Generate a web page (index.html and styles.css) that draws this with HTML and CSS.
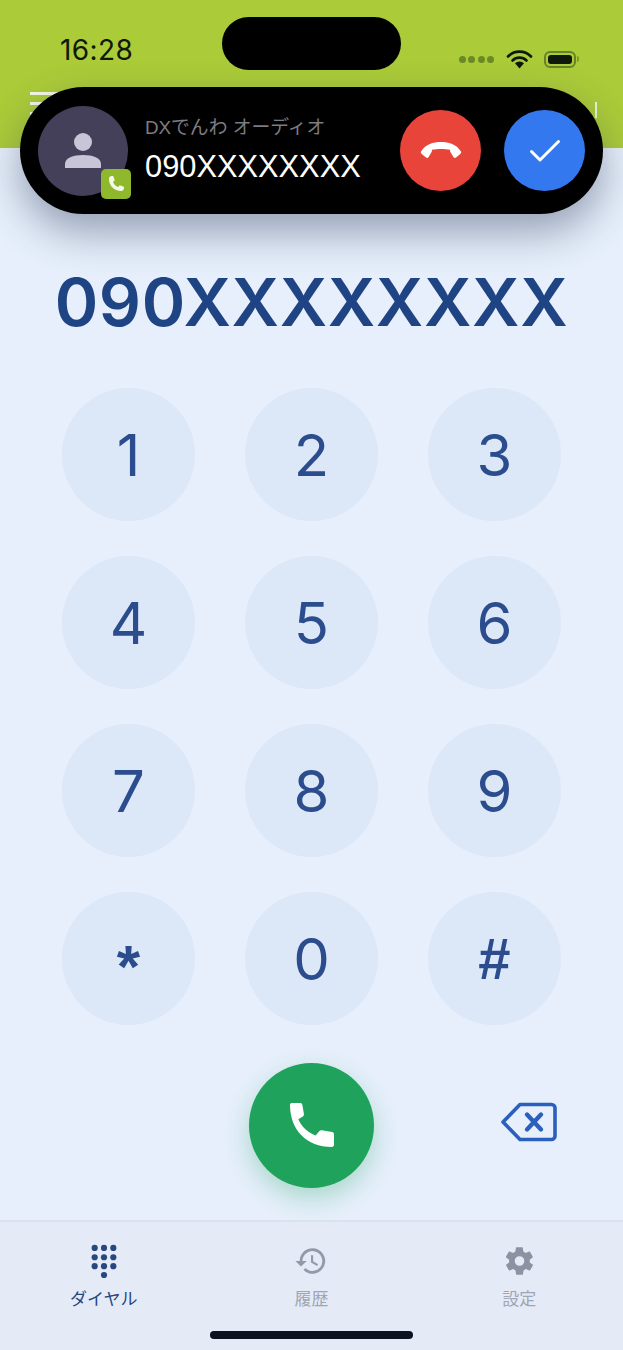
FILE: index.html
```html
<!DOCTYPE html>
<html lang="ja">
<head>
  <meta charset="UTF-8">
  <title>DXでんわ</title>
  <meta name="viewport" content="width=device-width, initial-scale=1">
  <link rel="stylesheet" href="styles.css">
</head>
<body>
  <div class="phone">
    <header class="top-bar">
      <div class="status-row">
        <span class="clock">16:28</span>
        <div class="status-icons">
          <div class="signal"><i></i><i></i><i></i><i></i></div>
          <svg class="wifi" width="27" height="20" viewBox="0 0 27 20">
            <path d="M2 7.500a16 16 0 0 1 23 0" fill="none" stroke="#10180a" stroke-width="2.600" stroke-linecap="round"/>
            <path d="M6.500 11.500a10 10 0 0 1 14 0" fill="none" stroke="#10180a" stroke-width="2.600" stroke-linecap="round"/>
            <path d="M9 14.200a6.500 6.500 0 0 1 9 0L13.500 19.500z" fill="#10180a"/>
          </svg>
          <div class="battery"><div class="battery-fill"></div></div>
          <div class="battery-cap"></div>
        </div>
      </div>
      <div class="nav-row">
        <div class="menu-icon"><i></i><i></i><i></i></div>
        <div class="nav-end"></div>
      </div>
    </header>

    <div class="island"></div>

    <div class="call-pill">
      <div class="avatar">
        <svg width="36" height="35" viewBox="0 0 36 35">
          <circle cx="18" cy="9" r="9" fill="#c9c5d8"/>
          <path d="M0 35v-4c0-6 8-9 18-9s18 3 18 9v4z" fill="#c9c5d8"/>
        </svg>
        <div class="avatar-badge">
          <svg width="20" height="20" viewBox="0 0 24 24">
            <path d="M6.600 2.500c-1 0-3.100 1-3.100 3.300C3.500 14 10 20.500 18.200 20.500c2.300 0 3.300-2.100 3.300-3.100v-2l-5-2-2 2.200c-2.700-1-5.100-3.400-6.100-6.100l2.200-2-2-5z" fill="#f4f8e6"/>
          </svg>
        </div>
      </div>
      <div class="call-info">
        <div class="call-app">DXでんわ オーディオ</div>
        <div class="call-number">090XXXXXXXX</div>
      </div>
      <div class="call-actions">
        <button class="round-btn decline">
          <svg width="44" height="24" viewBox="0 0 44 24">
            <path d="M2 12.500C7 5 14 3 22 3s15 2 20 9.500c.6 1-.2 2-1 2.700l-4 3.300c-1 .8-2 .5-2.600-.4l-3-5.100c-.5-.8-.4-1.800-.2-2.200-5.500-1.200-12.900-1.200-18.400 0 .2.400.3 1.400-.2 2.200l-3 5.100c-.6.900-1.600 1.200-2.600.4l-4-3.300c-.8-.7-1.600-1.700-1-2.700z" fill="#fff"/>
          </svg>
        </button>
        <button class="round-btn accept">
          <svg width="32" height="24" viewBox="0 0 32 24">
            <path d="M2.500 12.500l8.500 8.500L29.500 2.500" fill="none" stroke="#fff" stroke-width="3" stroke-linecap="round" stroke-linejoin="round"/>
          </svg>
        </button>
      </div>
    </div>

    <main class="dialer">
      <div class="dialed-number">090XXXXXXXX</div>
      <div class="keypad">
        <button class="key">1</button>
        <button class="key">2</button>
        <button class="key">3</button>
        <button class="key">4</button>
        <button class="key">5</button>
        <button class="key">6</button>
        <button class="key">7</button>
        <button class="key">8</button>
        <button class="key">9</button>
        <button class="key key-star">*</button>
        <button class="key">0</button>
        <button class="key key-hash">#</button>
      </div>
      <div class="dial-actions">
        <div></div>
        <button class="call-btn">
          <svg width="44" height="45" viewBox="8 3 36 40" preserveAspectRatio="none">
            <path d="M8 4.500c0-1 .8-1.500 1.700-1.500h6.500c1 0 1.700.6 1.900 1.500l1.300 8.300c.1.900-.2 1.600-.9 2.100l-3.700 2.600c2.200 6.200 8 12 14.200 14.400l2.900-3.800c.6-.7 1.300-.9 2.100-.8l8.500 1.500c.9.200 1.500.9 1.500 1.900v9.700c0 1-.7 1.600-1.700 1.600C21.500 42 8 27 8 4.500z" fill="#fff"/>
          </svg>
        </button>
        <button class="backspace">
          <svg width="60" height="40" viewBox="0 0 60 40">
            <path d="M20 2.500h31.500a3.500 3.500 0 0 1 3.500 3.500v28a3.500 3.500 0 0 1-3.500 3.500H20L3 20z" fill="none" stroke="#2b5fbd" stroke-width="3.600" stroke-linejoin="round"/>
            <path d="M27 12.500l14 15M41 12.500l-14 15" fill="none" stroke="#2b5fbd" stroke-width="4.400" stroke-linecap="round"/>
          </svg>
        </button>
      </div>
    </main>

    <nav class="tab-bar">
      <div class="tab active">
        <svg width="28" height="36" viewBox="0 0 30 36">
          <g fill="#27477f">
            <circle cx="5" cy="4" r="3.300"/><circle cx="15" cy="4" r="3.300"/><circle cx="25" cy="4" r="3.300"/>
            <circle cx="5" cy="14" r="3.300"/><circle cx="15" cy="14" r="3.300"/><circle cx="25" cy="14" r="3.300"/>
            <circle cx="5" cy="23.500" r="3.300"/><circle cx="15" cy="23.500" r="3.300"/><circle cx="25" cy="23.500" r="3.300"/>
            <circle cx="15" cy="33" r="3.300"/>
          </g>
        </svg>
        <span>ダイヤル</span>
      </div>
      <div class="tab">
        <svg width="34" height="36" viewBox="0 0 24 24">
          <path d="M13 3a9 9 0 0 0-9 9H1l3.900 3.900L9 12H6a7 7 0 1 1 2.100 5l-1.400 1.400A9 9 0 1 0 13 3zm-1 5v5l4.300 2.500.7-1.200-3.500-2.100V8z" fill="#9299a8"/>
        </svg>
        <span>履歴</span>
      </div>
      <div class="tab">
        <svg width="33" height="36" viewBox="0 0 24 24">
          <path d="M19.400 13c.1-.3.100-.7.100-1s0-.7-.1-1l2.100-1.600c.2-.2.200-.4.100-.6l-2-3.500c-.1-.2-.4-.3-.6-.2l-2.500 1c-.5-.4-1.100-.7-1.700-1l-.4-2.700c0-.2-.2-.4-.5-.4h-4c-.2 0-.4.200-.5.400l-.4 2.700c-.6.300-1.200.6-1.700 1l-2.500-1c-.2-.1-.5 0-.6.200l-2 3.500c-.1.200-.1.500.1.600L4.500 11c0 .3-.1.700-.1 1s0 .7.1 1l-2.100 1.600c-.2.200-.2.400-.1.600l2 3.500c.1.200.4.300.6.200l2.500-1c.5.400 1.100.7 1.700 1l.4 2.700c.1.200.3.400.5.400h4c.3 0 .5-.2.500-.4l.4-2.700c.6-.3 1.200-.6 1.700-1l2.500 1c.2.100.5 0 .6-.2l2-3.500c.1-.2.100-.4-.1-.6zM12 15.500a3.500 3.500 0 1 1 0-7 3.500 3.500 0 0 1 0 7z" fill="#8b92a1"/>
        </svg>
        <span>設定</span>
      </div>
      <div class="home-bar"></div>
    </nav>
  </div>
</body>
</html>
```

FILE: styles.css
```css
* {
  box-sizing: border-box;
  font-family: "Liberation Sans", "Noto Sans CJK JP", sans-serif;
}
body {
  margin: 0;
  background: #e6eefa;
}
button {
  border: none;
  padding: 0;
  cursor: pointer;
}
.phone {
  position: relative;
  width: 623px;
  height: 1350px;
  overflow: hidden;
  display: flex;
  flex-direction: column;
  background: #e6effb;
}

/* top green area */
.top-bar {
  height: 148px;
  background: #abcb38;
  padding: 0 26px 0 30px;
  display: flex;
  flex-direction: column;
}
.status-row {
  display: flex;
  justify-content: space-between;
  padding: 33px 0 0 30px;
  height: 92px;
}
.clock {
  font-size: 28px;
  line-height: 34px;
  letter-spacing: 0.4px;
  color: #10180a;
  font-family: "Inter", sans-serif;
}
.status-icons {
  display: flex;
  align-items: center;
  height: 34px;
  margin-top: 9px;
  margin-right: 18px;
}
.signal {
  display: flex;
  gap: 2.500px;
  margin-right: 12px;
}
.signal i {
  width: 7px;
  height: 7px;
  border-radius: 50%;
  background: #6b8a26;
}
.wifi {
  margin-right: 11px;
}
.battery {
  width: 32px;
  height: 17px;
  border: 2px solid #66832a;
  border-radius: 6px;
  padding: 2px;
}
.battery-fill {
  height: 100%;
  background: #10180a;
  border-radius: 3px;
}
.battery-cap {
  width: 2px;
  height: 6px;
  margin-left: 1px;
  background: #7d9a30;
  border-radius: 0 2px 2px 0;
}
.nav-row {
  display: flex;
  justify-content: space-between;
}
.menu-icon {
  display: flex;
  flex-direction: column;
  gap: 7px;
}
.menu-icon i {
  display: block;
  width: 30px;
  height: 3px;
  background: #f4f8e6;
}
.nav-end {
  width: 2px;
  height: 16px;
  margin-top: 10px;
  background: #eef5d0;
}

/* overlays */
.island {
  position: absolute;
  left: 222px;
  top: 17px;
  width: 179px;
  height: 53px;
  border-radius: 27px;
  background: #000;
}
.call-pill {
  position: absolute;
  left: 20px;
  top: 87px;
  width: 583px;
  height: 127px;
  border-radius: 64px;
  background: #000;
  box-shadow: 0 18px 40px rgba(50, 65, 95, 0.45);
  display: flex;
  align-items: center;
  padding: 0 18px;
}
.avatar {
  position: relative;
  width: 90px;
  height: 90px;
  border-radius: 50%;
  background: #44405a;
  display: flex;
  align-items: center;
  justify-content: center;
  flex-shrink: 0;
}
.avatar-badge {
  position: absolute;
  left: 63px;
  top: 63px;
  width: 30px;
  height: 30px;
  border-radius: 5px;
  background: #8fb82c;
  display: flex;
  align-items: center;
  justify-content: center;
}
.call-info {
  margin-left: 17px;
  flex: 1;
}
.call-app {
  font-size: 18.800px;
  line-height: 24px;
  color: #7c7c82;
}
.call-number {
  font-size: 30.800px;
  line-height: 36px;
  margin-top: 9px;
  color: #fff;
}
.call-actions {
  display: flex;
  gap: 23px;
}
.round-btn {
  width: 81px;
  height: 81px;
  border-radius: 50%;
  display: flex;
  align-items: center;
  justify-content: center;
}
.decline {
  background: #e8443a;
}
.accept {
  background: #3478f0;
}

/* dialer */
.dialer {
  flex: 1;
  padding: 0 62px;
  display: flex;
  flex-direction: column;
}
.dialed-number {
  margin: 112px -20px 0;
  text-align: center;
  font-family: "Inter", sans-serif;
  font-size: 66px;
  line-height: 84px;
  font-weight: 600;
  letter-spacing: 0.6px;
  color: #1f4484;
  white-space: nowrap;
}
.keypad {
  margin-top: 44px;
  display: grid;
  grid-template-columns: repeat(3, 133px);
  justify-content: space-between;
  row-gap: 35px;
}
.key {
  width: 133px;
  height: 133px;
  border-radius: 50%;
  background: #dce8f8;
  color: #2b4d8d;
  font-family: "Inter", sans-serif;
  font-size: 58px;
}
.key-star {
  padding-top: 16px;
  font-family: "Liberation Sans", sans-serif;
  font-size: 60px;
  font-weight: 700;
}
.key-hash {
  font-family: "Liberation Sans", sans-serif;
  font-weight: 700;
}
.dial-actions {
  margin-top: 38px;
  display: grid;
  grid-template-columns: 133px 133px 133px;
  justify-content: space-between;
  align-items: center;
}
.call-btn {
  justify-self: center;
  width: 125px;
  height: 125px;
  border-radius: 50%;
  background: #1fa35c;
  box-shadow: 0 10px 24px rgba(31, 163, 92, 0.3);
  display: flex;
  align-items: center;
  justify-content: center;
}
.backspace {
  background: none;
  justify-self: end;
  margin: -8px 1.500px 0 0;
  display: flex;
}

/* tabs */
.tab-bar {
  position: relative;
  height: 130px;
  border-top: 2px solid #dbe2ee;
  background: #e4ebf7;
  display: grid;
  grid-template-columns: repeat(3, 1fr);
  padding: 21px 0 0;
}
.tab {
  display: flex;
  flex-direction: column;
  align-items: center;
  gap: 10px;
  font-size: 17px;
  line-height: 22px;
  color: #a0a5b2;
}
.tab.active {
  color: #27477f;
}
.home-bar {
  position: absolute;
  left: 210px;
  bottom: 11px;
  width: 203px;
  height: 8px;
  border-radius: 4px;
  background: #0c1220;
}
```
